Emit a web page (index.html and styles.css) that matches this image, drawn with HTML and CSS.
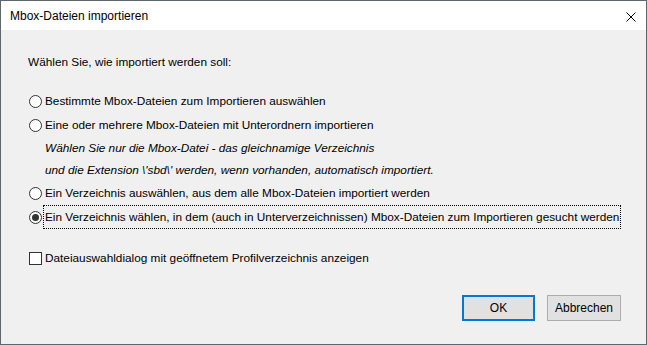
FILE: index.html
```html
<!DOCTYPE html>
<html>

<head>
  <title>Mbox-Dateien importieren</title>
  <link rel="stylesheet" href="styles.css">
</head>

<body>
  <div class="window">
    <div class="titlebar">
      <span class="title">Mbox-Dateien importieren</span>
      <svg class="close" width="10" height="10" viewBox="0 0 10 10">
        <path d="M0.5 0.5 L9.5 9.5 M9.5 0.5 L0.5 9.5" stroke="#000" stroke-width="1" fill="none" />
      </svg>
    </div>

    <div class="content">
      <div class="intro">Wählen Sie, wie importiert werden soll:</div>

      <div class="options">
        <label class="row"><span class="radio"></span><span>Bestimmte Mbox-Dateien zum Importieren auswählen</span></label>
        <label class="row"><span class="radio"></span><span>Eine oder mehrere Mbox-Dateien mit Unterordnern importieren</span></label>
        <div class="hint">Wählen Sie nur die Mbox-Datei - das gleichnamige Verzeichnis</div>
        <div class="hint">und die Extension \'sbd\' werden, wenn vorhanden, automatisch importiert.</div>
        <label class="row"><span class="radio"></span><span>Ein Verzeichnis auswählen, aus dem alle Mbox-Dateien importiert werden</span></label>
        <label class="row"><span class="radio checked"></span><span class="focus">Ein Verzeichnis wählen, in dem (auch in Unterverzeichnissen) Mbox-Dateien zum Importieren gesucht werden</span></label>
      </div>

      <label class="row check-row"><span class="checkbox"></span><span>Dateiauswahldialog mit geöffnetem Profilverzeichnis anzeigen</span></label>

      <div class="buttons">
        <button class="btn default">OK</button>
        <button class="btn">Abbrechen</button>
      </div>
    </div>
  </div>
</body>

</html>
```

FILE: styles.css
```css
html,
body {
  margin: 0;
  padding: 0;
}

body {
  width: 647px;
  height: 345px;
  font-family: "Liberation Sans", Arial, sans-serif;
  font-size: 11.8px;
  color: #000;
}

.window {
  box-sizing: border-box;
  width: 647px;
  height: 345px;
  border: 1px solid #5d6770;
  display: flex;
  flex-direction: column;
  background: #f0f0f0;
}

.titlebar {
  height: 29px;
  background: #fff;
  display: flex;
  align-items: center;
  justify-content: space-between;
  padding: 0 10px 0 9px;
}

.title {
  font-size: 12px;
  margin-top: 1px;
}

.close {
  display: block;
  margin-top: 2px;
}

.content {
  flex-grow: 1;
  display: flex;
  flex-direction: column;
  padding: 20px 0 0 27px;
}

.intro {
  line-height: 24px;
  margin-bottom: 15px;
}

.row {
  display: flex;
  align-items: center;
  height: 24px;
  gap: 3px;
}

.radio {
  box-sizing: border-box;
  width: 13px;
  height: 13px;
  border: 1px solid #333;
  border-radius: 50%;
  background: #fff;
  display: flex;
  align-items: center;
  justify-content: center;
  margin-left: 1px;
}

.radio.checked::after {
  content: "";
  width: 7px;
  height: 7px;
  border-radius: 50%;
  background: #333;
}

.hint {
  font-style: italic;
  line-height: 22px;
  padding-left: 17px;
}

.focus {
  outline: 1px dotted #000;
  padding: 4px 1px 4px 1px;
  margin-left: -1px;
}

.checkbox {
  box-sizing: border-box;
  width: 13px;
  height: 13px;
  border: 1px solid #333;
  background: #fff;
  margin-left: 1px;
}

.check-row {
  margin-top: 17px;
}

.buttons {
  display: flex;
  justify-content: flex-end;
  gap: 12px;
  margin-top: 25px;
  padding-right: 25px;
}

.btn {
  box-sizing: border-box;
  width: 74px;
  height: 26px;
  font-family: inherit;
  font-size: 12px;
  background: #e1e1e1;
  border: 1px solid #adadad;
  padding: 0;
  color: #000;
}

.btn.default {
  width: 73px;
  border: 2px solid #0078d7;
}
```
